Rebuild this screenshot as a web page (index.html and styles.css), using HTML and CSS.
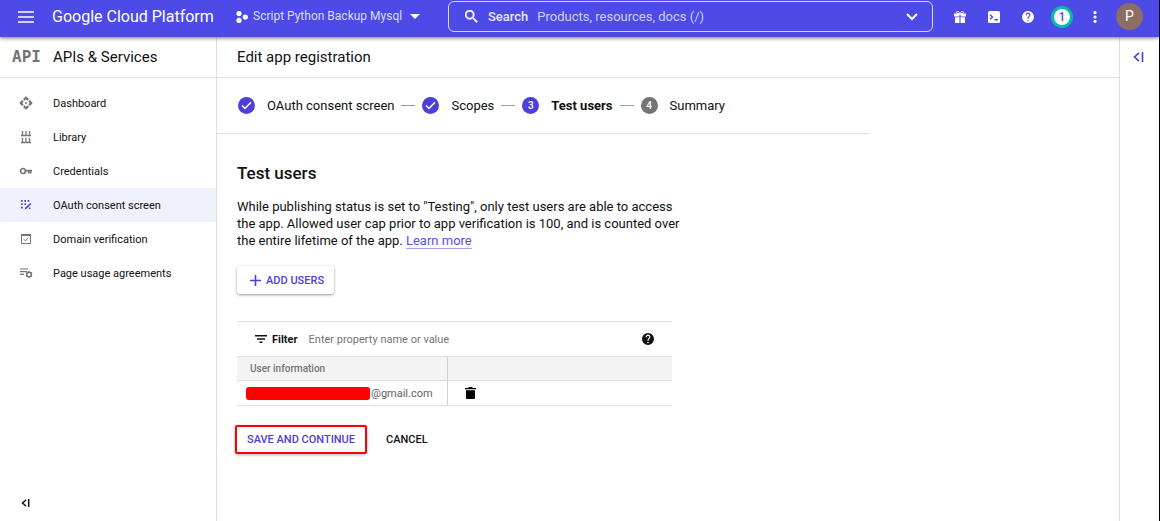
FILE: index.html
```html
<!DOCTYPE html>
<html lang="en">
<head>
<meta charset="utf-8">
<meta name="viewport" content="width=device-width, initial-scale=1">
<title>Edit app registration</title>
<link rel="stylesheet" href="styles.css">
</head>
<body>
<header class="topbar">
  <button class="icon-btn menu-btn" aria-label="Menu"><svg width="16" height="12" viewBox="0 0 16 12"><path d="M0 1h16M0 6h16M0 11h16" stroke="currentColor" stroke-width="1.700"/></svg></button>
  <a class="brand" href="#">Google Cloud Platform</a>
  <button class="project">
    <svg width="12" height="12" viewBox="0 0 12 12" fill="currentColor"><circle cx="3" cy="2.600" r="2.600"/><circle cx="9.300" cy="6" r="2.600"/><circle cx="3" cy="9.400" r="2.600"/></svg>
    <span>Script Python Backup Mysql</span>
    <svg class="caret" width="10" height="5" viewBox="0 0 10 5" fill="currentColor"><path d="M0 0h10L5 5z"/></svg>
  </button>
  <form class="search">
    <svg width="13" height="13" viewBox="3 3 18 18" fill="currentColor" stroke="currentColor" stroke-width=".6"><path d="M15.500 14h-.79l-.28-.27A6.470 6.470 0 0 0 16 9.500 6.500 6.500 0 1 0 9.500 16c1.610 0 3.090-.59 4.230-1.570l.27.28v.79l5 4.990L20.490 19l-4.990-5zm-6 0a4.500 4.500 0 1 1 0-9 4.500 4.500 0 0 1 0 9z"/></svg>
    <label for="q">Search</label>
    <input id="q" type="text" placeholder="Products, resources, docs (/)">
    <button type="button" class="icon-btn" aria-label="Expand search"><svg width="12" height="8" viewBox="0 0 12 8" fill="none" stroke="currentColor" stroke-width="2"><path d="M1 1l5 5 5-5"/></svg></button>
  </form>
  <nav class="tools" aria-label="Tools">
    <button class="icon-btn" aria-label="Free trial"><svg width="12" height="12" viewBox="0 0 12 12" fill="currentColor"><path d="M0 2.500h5.500v3H0zM6.500 2.500H12v3H6.500zM1 6.200h4.500V12H1zM6.500 6.200H11V12H6.500z"/><path d="M6 3C5 0 2.500-.3 2.500 1.200S5 2.600 6 3c1-.4 3.500-.3 3.500-1.800S7 0 6 3z" fill="none" stroke="currentColor"/></svg></button>
    <button class="icon-btn" aria-label="Cloud Shell"><svg width="12" height="12" viewBox="0 0 12 12"><rect width="12" height="12" rx="1.500" fill="currentColor"/><path d="M2 3.800l2.400 2.200L2 8.200M6.500 8.800H10" fill="none" stroke="#4e4ae8" stroke-width="1.500"/></svg></button>
    <button class="icon-btn" aria-label="Help"><svg width="12" height="12" viewBox="2 2 20 20" fill="currentColor"><path d="M12 2a10 10 0 1 0 0 20 10 10 0 0 0 0-20zm1 17h-2v-2h2v2zm2.070-7.750-.9.920C13.450 12.900 13 13.500 13 15h-2v-.5c0-1.100.45-2.100 1.170-2.830l1.240-1.260A2 2 0 1 0 10 9H8a4 4 0 1 1 7.070 2.250z"/></svg></button>
    <button class="count" aria-label="Notifications">1</button>
    <button class="icon-btn" aria-label="More"><svg width="4" height="12" viewBox="0 0 4 12" fill="currentColor"><circle cx="2" cy="1.700" r="1.600"/><circle cx="2" cy="6" r="1.600"/><circle cx="2" cy="10.300" r="1.600"/></svg></button>
    <button class="avatar" aria-label="Account">P</button>
  </nav>
</header>
<div class="shell">
  <aside class="sidebar">
    <div class="section-title"><span class="api" aria-hidden="true">API</span><h2>APIs &amp; Services</h2></div>
    <nav class="nav" aria-label="APIs and Services">
      <a href="#"><svg width="14" height="14" viewBox="0 0 14 14" fill="currentColor"><path d="M7 .3l3 2.700-1.400 1.700L7 3.300 5.400 4.700 4 3zM7 13.700l3-2.700-1.400-1.700L7 10.700 5.400 9.300 4 11zM.3 7L3 4l1.700 1.400L3.300 7l1.400 1.600L3 10zM13.700 7L11 4 9.300 5.400 10.700 7 9.300 8.600 11 10z"/><circle cx="7" cy="7" r="1"/></svg>Dashboard</a>
      <a href="#"><svg width="14" height="14" viewBox="0 0 14 14" fill="none" stroke="currentColor" stroke-width="1.300"><path d="M2 5.500h10M2 12.500h10M3.500 1v4.500M7 1v4.500M10.500 1v4.500M3.500 8v4.500M7 8v4.500M10.500 8v4.500"/></svg>Library</a>
      <a href="#"><svg width="14" height="14" viewBox="0 0 14 14" fill="none" stroke="currentColor" stroke-width="1.700"><circle cx="4" cy="7" r="2.500"/><path d="M6.500 6.700H13M9.700 7v2.400M11.700 7v2.400"/></svg>Credentials</a>
      <a href="#" class="active" aria-current="page"><svg width="14" height="14" viewBox="0 0 14 14" fill="currentColor"><path d="M2 2h1.700v1.700H2zM5.300 2H7v1.700H5.300zM8.600 2h1.700v1.700H8.600zM2 5.400h1.700v1.700H2zM5.300 5.400H7v1.700H5.300zM2 8.800h1.700v1.700H2z"/><path d="M11.300 5l1 1-4.700 4.800-1.900.7.600-1.900zM9.800 9.400h1.500v1.500H9.800z"/></svg>OAuth consent screen</a>
      <a href="#"><svg width="14" height="14" viewBox="0 0 14 14" fill="none" stroke="currentColor"><path d="M2.500 3h9v8.500h-9z"/><path d="M2 3h10" stroke-width="2"/><path d="M4.800 7.300l1.600 1.600 3-3.200"/></svg>Domain verification</a>
      <a href="#"><svg width="14" height="14" viewBox="0 0 14 14" fill="none" stroke="currentColor"><path d="M1 3h8M1 5.700h7M1 8.400h4" stroke-width="1.200"/><circle cx="10" cy="8.500" r="2.300" stroke-width="1.500"/><path d="M10 5v1M10 11v1.200M6.900 6.800l1 .6M12.100 9.700l1 .6M6.900 10.300l1-.6M12.100 7.300l1-.6" stroke-width="1.400"/></svg>Page usage agreements</a>
    </nav>
    <button class="icon-btn collapse" aria-label="Collapse menu"><svg width="9" height="8" viewBox="0 0 9 8" fill="none" stroke="currentColor" stroke-width="1.500"><path d="M5 1L1.500 4 5 7M7.700 0v8"/></svg></button>
  </aside>
  <main class="main">
    <div class="page-head"><h1>Edit app registration</h1></div>
    <div class="content">
      <ol class="steps">
        <li><span class="dot"><svg width="11" height="9" viewBox="0 0 11 9" fill="none" stroke="currentColor" stroke-width="1.500"><path d="M1 4.500L4 7.500 10 1.200"/></svg></span>OAuth consent screen</li>
        <li><span class="dot"><svg width="11" height="9" viewBox="0 0 11 9" fill="none" stroke="currentColor" stroke-width="1.500"><path d="M1 4.500L4 7.500 10 1.200"/></svg></span>Scopes</li>
        <li class="current" aria-current="step"><span class="dot">3</span>Test users</li>
        <li class="todo"><span class="dot">4</span>Summary</li>
      </ol>
      <section class="panel">
        <h2>Test users</h2>
        <p>While publishing status is set to "Testing", only test users are able to access the app. Allowed user cap prior to app verification is 100, and is counted over the entire lifetime of the app. <a href="#">Learn more</a></p>
        <button class="add"><svg width="11" height="11" viewBox="0 0 11 11" stroke="currentColor" stroke-width="1.600"><path d="M5.500 0v11M0 5.500h11"/></svg>ADD USERS</button>
        <div class="filter">
          <svg width="12" height="8" viewBox="0 0 12 8" fill="currentColor"><path d="M0 0h12v1.400H0zM2 3.300h8v1.400H2zM4.500 6.600h3V8h-3z"/></svg>
          <label for="filter">Filter</label>
          <input id="filter" type="text" placeholder="Enter property name or value">
          <button class="icon-btn" aria-label="Filter help"><svg width="12" height="12" viewBox="2 2 20 20" fill="currentColor"><path d="M12 2a10 10 0 1 0 0 20 10 10 0 0 0 0-20zm1 17h-2v-2h2v2zm2.070-7.750-.9.920C13.450 12.900 13 13.500 13 15h-2v-.5c0-1.100.45-2.100 1.170-2.830l1.240-1.260A2 2 0 1 0 10 9H8a4 4 0 1 1 7.070 2.250z"/></svg></button>
        </div>
        <table class="users">
          <thead><tr><th scope="col">User information</th><th aria-label="Actions"></th></tr></thead>
          <tbody><tr><td><span class="email"><span class="redacted"></span>@gmail.com</span></td><td><button class="icon-btn" aria-label="Delete user"><svg width="11" height="12" viewBox="0 0 11 12" fill="currentColor"><path d="M0 1h3l1-1h3l1 1h3v1.300H0zM1 3.200h9V11a1 1 0 0 1-1 1H2a1 1 0 0 1-1-1z"/></svg></button></td></tr></tbody>
        </table>
        <div class="actions"><button class="save">SAVE AND CONTINUE</button><button class="cancel">CANCEL</button></div>
      </section>
    </div>
  </main>
  <aside class="rail"><button class="icon-btn" aria-label="Show info panel"><svg width="11" height="10" viewBox="0 0 11 10" fill="none" stroke="currentColor" stroke-width="1.600"><path d="M6 .8L1.500 5 6 9.200M9.500 0v10"/></svg></button></aside>
</div>
</body>
</html>
```

FILE: styles.css
```css
* { box-sizing: border-box; }
body {
  margin: 0;
  min-height: 100vh;
  display: flex;
  flex-direction: column;
  border-right: 1px solid #000;
  background: #fff;
  color: #111;
  font: 13px/17px Roboto, sans-serif;
}
button, input { font: inherit; color: inherit; border: 0; padding: 0; background: none; }
button { cursor: pointer; }
input { outline: 0; min-width: 0; flex: 1; }
svg { display: block; flex: none; }
h1, h2, p, ol { margin: 0; padding: 0; }
a { color: inherit; text-decoration: none; }
.icon-btn { display: flex; align-items: center; justify-content: center; flex: none; }

.topbar {
  position: relative;
  height: 37px;
  display: flex;
  align-items: center;
  padding: 0 16px 4px 18px;
  background: #4e4ae8;
  color: #fff;
  box-shadow: 0 1px 4px rgba(0, 0, 0, .55);
}
.brand { margin-left: 18px; width: 165px; font-size: 16px; white-space: nowrap; }
.project { display: flex; align-items: center; gap: 5px; margin-left: 19px; width: 212px; color: #d9dcff; font-size: 12px; white-space: nowrap; }
.project svg { color: #fff; }
.project .caret { margin-left: 3px; }
.search {
  flex: 1;
  height: 31px;
  display: flex;
  align-items: center;
  padding: 0 14px 0 16px;
  border: 1px solid #d6d6fb;
  border-radius: 6px;
}
.search label { margin: 0 9px 0 10px; font-weight: 500; color: #e8e9ff; }
.search input::placeholder { color: #ced1fb; opacity: 1; }
.tools { display: flex; align-items: center; gap: 22px; margin-left: 21px; }
.count {
  width: 22px;
  height: 22px;
  margin: 0 -2px 0 -5px;
  border: 3px solid #00bfa5;
  border-radius: 50%;
  background: #fff;
  color: #4e4ae8;
  font-size: 12px;
  line-height: 16px;
  font-weight: 500;
}
.avatar { width: 27px; height: 27px; margin-left: -3px; border-radius: 50%; background: #8d6e63; font-size: 14px; }

.shell { flex: 1; display: flex; }
.sidebar { width: 217px; flex: none; display: flex; flex-direction: column; border-right: 1px solid #e0e0e0; }
.section-title, .page-head { height: 41px; display: flex; align-items: center; border-bottom: 1px solid #e0e0e0; }
.section-title { padding-left: 12px; }
.section-title h2, .page-head h1 { font-size: 15px; line-height: 20px; font-weight: 400; }
.api { width: 41px; color: #757575; font: bold 16px/20px "DejaVu Sans Mono", monospace; }
.nav { padding-top: 8px; font-size: 11px; }
.nav a { height: 34px; display: flex; align-items: center; gap: 20px; padding-left: 19px; }
.nav svg { color: #757575; }
.nav .active { background: #eff1fd; }
.nav .active svg { color: #4e3fd8; }
.collapse { margin: auto 0 14px 21px; align-self: flex-start; }

.main { flex: 1; min-width: 0; }
.page-head { padding-left: 20px; }
.content { max-width: 653px; }
.steps { display: flex; align-items: center; height: 56px; padding: 0 0 1px 21px; border-bottom: 1px solid #e0e0e0; list-style: none; }
.steps li { display: flex; align-items: center; white-space: nowrap; }
.steps li + li::before { content: ""; width: 14px; height: 1px; margin: 0 7px; background: #9e9e9e; }
.dot {
  width: 17px;
  height: 17px;
  margin-right: 12px;
  display: flex;
  align-items: center;
  justify-content: center;
  border-radius: 50%;
  background: #4e3fd8;
  color: #fff;
  font-size: 10px;
  font-weight: 500;
}
.current { font-weight: 700; }
.todo .dot { background: #757575; }

.panel { max-width: 455px; padding: 29px 0 20px 20px; }
.panel h2 { font-size: 17px; line-height: 20px; font-weight: 500; margin-bottom: 15px; }
.panel p { margin-right: -8px; }
.panel p a { color: #5b4fe0; text-decoration: underline 1px #a79ff0; text-underline-offset: 3px; }
.add {
  display: flex;
  align-items: center;
  gap: 5px;
  height: 28px;
  margin: 17px 0 27px;
  padding: 0 10px 0 13px;
  border-radius: 3px;
  box-shadow: 0 1px 3px rgba(0, 0, 0, .4);
  color: #4e3fd8;
  font-size: 11px;
  font-weight: 500;
}
.filter { display: flex; align-items: center; height: 35px; padding: 0 18px; border-top: 1px solid #e0e0e0; font-size: 11px; }
.filter label { margin: 0 11px 0 5px; font-weight: 700; }
.filter input::placeholder { color: #757575; opacity: 1; }
.users { width: 100%; border-collapse: collapse; table-layout: fixed; font-size: 11px; color: #616161; }
.users th, .users td { height: 24px; padding: 0; border: 0 solid #e0e0e0; border-width: 1px 0; text-align: left; }
.users td { height: 25px; }
.users th { background: #f4f4f4; padding-left: 13px; font-size: 10px; font-weight: 500; color: #757575; }
.users th:first-child { width: 210px; }
.users th + th, .users td + td { border-left: 1px solid #d0d0d0; }
.users td + td { padding-left: 17px; color: #000; }
.email { display: flex; align-items: center; padding-left: 9px; }
.redacted { width: 124px; height: 13px; margin-right: 1px; border-radius: 3px; background: #f00; }
.actions { display: flex; align-items: center; gap: 19px; margin: 19px 0 0 -2px; font-size: 11px; font-weight: 500; }
.save { height: 29px; padding: 0 10px; border: 2px solid #f00; border-radius: 2px; color: #4e3fd8; box-shadow: 0 1px 3px rgba(0, 0, 0, .3); }

.rail { width: 40px; flex: none; border-left: 1px solid #e0e0e0; padding: 15px 0 0 13px; color: #4e3fd8; }
```
